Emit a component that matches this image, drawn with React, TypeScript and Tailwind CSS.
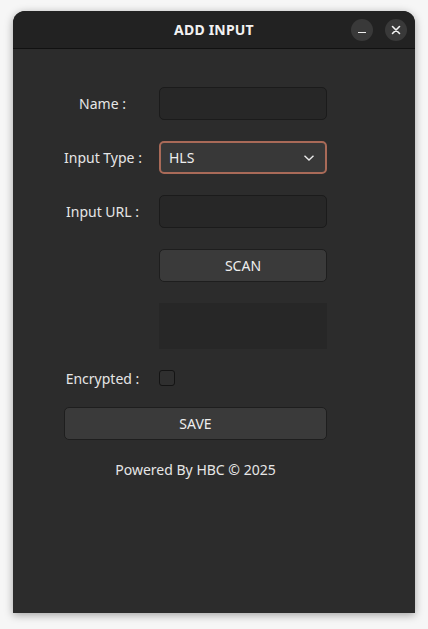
import React, { useState } from 'react';

const labelCls = 'w-[77px] text-center text-[14px] text-[#e6e6e6] whitespace-nowrap';

const App: React.FC = () => {
  const [name, setName] = useState('');
  const [url, setUrl] = useState('');
  const [encrypted, setEncrypted] = useState(false);

  return (
    <div className="w-[428px] h-[629px] bg-[#f6f6f6] pt-[11px] pl-[13px]" style={{ fontFamily: '"Noto Sans", "Open Sans", sans-serif' }}>
      <div className="w-[402px] h-[602px] flex flex-col bg-[#2c2c2c] rounded-t-[12px] overflow-hidden shadow-[0_2px_8px_rgba(0,0,0,0.35)]">
        {/* title bar */}
        <div className="relative h-[38px] bg-[#222222] border-b border-[#111] flex items-center justify-center shrink-0">
          <span className="text-[14px] font-bold text-[#f2f2f2] tracking-[0.2px]">ADD INPUT</span>
          <div className="absolute right-[8px] top-[8px] flex gap-[12px]">
            <button className="w-[22px] h-[22px] rounded-full bg-[#393939] flex items-center justify-center">
              <span className="block w-[8px] h-[1.5px] bg-[#eee] mt-[5px]" />
            </button>
            <button className="w-[22px] h-[22px] rounded-full bg-[#393939] flex items-center justify-center">
              <svg width="10" height="10" viewBox="0 0 10 10" stroke="#f2f2f2" strokeWidth="1.6" strokeLinecap="round">
                <path d="M1.5 1.5 L8.5 8.5 M8.5 1.5 L1.5 8.5" />
              </svg>
            </button>
          </div>
        </div>

        {/* form */}
        <div className="pl-[51px] pt-[38px] flex flex-col">
          <div className="flex items-center gap-[18px] h-[33px]">
            <span className={labelCls}>Name :</span>
            <input
              value={name}
              onChange={(e) => setName(e.target.value)}
              className="w-[168px] h-[33px] rounded-[5px] bg-[#272727] border border-[#1b1b1b] outline-none px-2 text-[14px] text-[#eee]"
            />
          </div>

          <div className="flex items-center gap-[18px] h-[33px] mt-[21px]">
            <span className={labelCls}>Input Type :</span>
            <div className="w-[168px] h-[33px] rounded-[5px] bg-[#383838] border-2 border-[#a96a58] flex items-center justify-between pl-[8px] pr-[10px]">
              <span className="text-[14px] text-[#eeeeee]">HLS</span>
              <svg width="12" height="8" viewBox="0 0 12 8" fill="none" stroke="#e8e8e8" strokeWidth="1.4">
                <path d="M1.5 1.8 L6 6 L10.5 1.8" />
              </svg>
            </div>
          </div>

          <div className="flex items-center gap-[18px] h-[33px] mt-[21px]">
            <span className={labelCls}>Input URL :</span>
            <input
              value={url}
              onChange={(e) => setUrl(e.target.value)}
              className="w-[168px] h-[33px] rounded-[5px] bg-[#272727] border border-[#1b1b1b] outline-none px-2 text-[14px] text-[#eee]"
            />
          </div>

          <div className="flex items-center gap-[18px] h-[33px] mt-[21px]">
            <span className="w-[77px]" />
            <button className="w-[168px] h-[33px] rounded-[5px] bg-[#3a3a3a] border border-[#1e1e1e] text-[14px] text-[#eeeeee]">
              SCAN
            </button>
          </div>

          <div className="flex gap-[18px] mt-[21px]">
            <span className="w-[77px]" />
            <div className="w-[168px] h-[46px] bg-[#272727]" />
          </div>

          <div className="flex items-center gap-[18px] h-[16px] mt-[21px]">
            <span className={labelCls}>Encrypted :</span>
            <button
              onClick={() => setEncrypted(!encrypted)}
              className="w-[16px] h-[16px] rounded-[3px] bg-[#2f2f2f] border border-[#141414]"
            />
          </div>

          <button className="w-[263px] h-[33px] mt-[21px] rounded-[5px] bg-[#3a3a3a] border border-[#1e1e1e] text-[14px] text-[#eeeeee]">
            SAVE
          </button>

          <div className="w-[263px] text-center mt-[19px] text-[14px] text-[#e6e6e6]">
            Powered By HBC © 2025
          </div>
        </div>
      </div>
    </div>
  );
};

export default App;
